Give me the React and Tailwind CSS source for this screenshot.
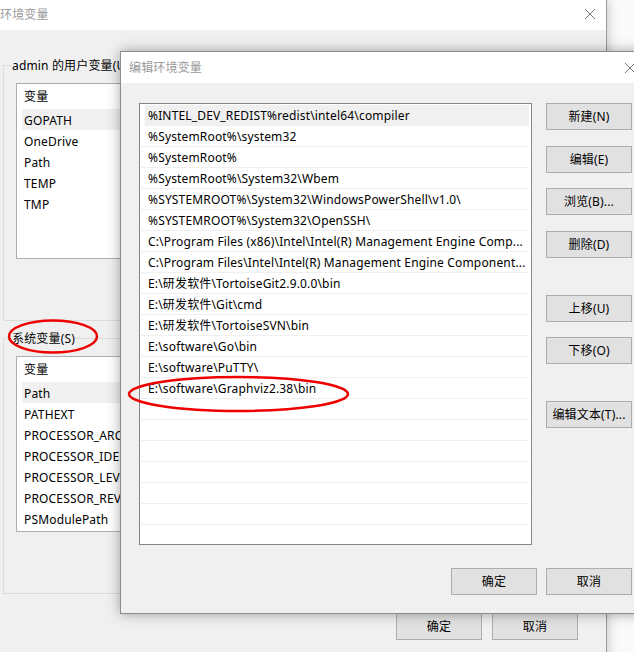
import React from "react";

const FONT = { fontFamily: '"Noto Sans", "Noto Sans CJK SC", sans-serif', letterSpacing: "0.16px" };

const paths = [
  "%INTEL_DEV_REDIST%redist\\intel64\\compiler",
  "%SystemRoot%\\system32",
  "%SystemRoot%",
  "%SystemRoot%\\System32\\Wbem",
  "%SYSTEMROOT%\\System32\\WindowsPowerShell\\v1.0\\",
  "%SYSTEMROOT%\\System32\\OpenSSH\\",
  "C:\\Program Files (x86)\\Intel\\Intel(R) Management Engine Comp...",
  "C:\\Program Files\\Intel\\Intel(R) Management Engine Component...",
  "E:\\研发软件\\TortoiseGit2.9.0.0\\bin",
  "E:\\研发软件\\Git\\cmd",
  "E:\\研发软件\\TortoiseSVN\\bin",
  "E:\\software\\Go\\bin",
  "E:\\software\\PuTTY\\",
  "E:\\software\\Graphviz2.38\\bin",
];

const userVars = ["GOPATH", "OneDrive", "Path", "TEMP", "TMP"];
const sysVars = [
  "Path",
  "PATHEXT",
  "PROCESSOR_ARCHITECTURE",
  "PROCESSOR_IDENTIFIER",
  "PROCESSOR_LEVEL",
  "PROCESSOR_REVISION",
  "PSModulePath",
];

function Btn({ children, className = "" }) {
  return (
    <div
      className={
        "h-[27px] w-[86px] flex items-center justify-center pt-[1px] bg-[#e1e1e1] border border-[#adadad] text-[12px] text-black " +
        className
      }
    >
      {children}
    </div>
  );
}

function CloseX({ className = "" }) {
  return (
    <svg width="12" height="12" viewBox="0 0 12 12" className={className}>
      <path d="M1 1 L11 11 M11 1 L1 11" stroke="#7a7a7a" strokeWidth="1" />
    </svg>
  );
}

function VarList({ items, heightClass }) {
  return (
    <div className={"ml-[12px] w-[600px] bg-white border border-[#adadad] " + heightClass}>
      <div className="h-[25px] flex items-center pt-[1px] pl-[7px] text-[12px]">变量</div>
      {items.map((v, i) => (
        <div
          key={v}
          className={
            "h-[21px] flex items-center pt-[2px] pl-[2px] ml-[5px] text-[12px] whitespace-nowrap " +
            (i === 0 ? "bg-[#f0f0f0]" : "")
          }
        >
          {v}
        </div>
      ))}
    </div>
  );
}

export default function App() {
  const emptyRows = 7;
  return (
    <div className="relative w-[634px] h-[652px] overflow-hidden bg-[#fafafa]" style={FONT}>
      {/* background window */}
      <div className="w-[607px] h-[660px] bg-[#f0f0f0] border-r border-[#9a9a9a] shadow-[2px_0_10px_rgba(0,0,0,0.18)] flex flex-col">
        <div className="h-[30px] bg-white flex items-center justify-between pr-[10px]">
          <span className="text-[12px] text-[#9a9a9a] ml-0 mt-[-1px]">环境变量</span>
          <CloseX className="mt-[-2px]" />
        </div>
        {/* group 1 */}
        <div className="relative mt-[35px] ml-[3px] h-[256px] w-[598px] border border-[#dcdcdc]">
          <span className="absolute left-[8px] top-[-8px] bg-[#f0f0f0] text-[12px] leading-[16px] text-black whitespace-nowrap">
            admin 的用户变量(U)
          </span>
          <div className="mt-[17px]">
            <VarList items={userVars} heightClass="h-[176px]" />
          </div>
        </div>
        {/* group 2 */}
        <div className="relative mt-[17px] ml-[3px] h-[256px] w-[598px] border border-[#dcdcdc]">
          <span className="absolute left-[8px] top-[-8px] bg-[#f0f0f0] text-[12px] leading-[16px] text-black whitespace-nowrap">
            系统变量(S)
          </span>
          <div className="mt-[17px]">
            <VarList items={sysVars} heightClass="h-[176px]" />
          </div>
        </div>
        <div className="flex gap-[10px] ml-[396px] mt-[19px]">
          <Btn>确定</Btn>
          <Btn>取消</Btn>
        </div>
      </div>

      {/* front dialog */}
      <div className="absolute left-[120px] top-[51px] w-[530px] h-[563px] bg-[#f0f0f0] border border-[#8c8c8c] shadow-[0_0_12px_rgba(0,0,0,0.35)] flex flex-col">
        <div className="h-[31px] bg-white flex items-center justify-between pr-[13px]">
          <span className="ml-[8px] text-[12px] text-[#9a9a9a]">编辑环境变量</span>
          <CloseX />
        </div>
        <div className="flex mt-[20px] ml-[18px]">
          <div className="w-[393px] h-[442px] bg-white border border-[#828790] pt-[1px] pl-[1px] pr-[2px] overflow-hidden">
            {paths.map((p, i) =>
              i === 0 ? (
                <div
                  key={p}
                  className="h-[21px] flex items-center pt-[2px] ml-[4px] pl-[3px] text-[12px] text-black whitespace-nowrap border-b border-[#f0f0f0] bg-[#f0f0f0]"
                >
                  {p}
                </div>
              ) : (
                <div
                  key={p}
                  className="h-[21px] flex items-center pt-[2px] pl-[7px] text-[12px] text-black whitespace-nowrap border-b border-[#f0f0f0]"
                >
                  {p}
                </div>
              )
            )}
            {Array.from({ length: emptyRows }).map((_, i) => (
              <div key={"e" + i} className="h-[21px] border-b border-[#f0f0f0]" />
            ))}
          </div>
          <div className="ml-[14px] flex flex-col">
            <Btn>新建(N)</Btn>
            <Btn className="mt-[16px]">编辑(E)</Btn>
            <Btn className="mt-[15px]">浏览(B)...</Btn>
            <Btn className="mt-[16px]">删除(D)</Btn>
            <Btn className="mt-[37px]">上移(U)</Btn>
            <Btn className="mt-[15px]">下移(O)</Btn>
            <Btn className="mt-[37px]">编辑文本(T)...</Btn>
          </div>
        </div>
        <div className="flex gap-[9px] ml-[330px] mt-[23px]">
          <Btn>确定</Btn>
          <Btn>取消</Btn>
        </div>
      </div>

      {/* red annotation ellipses */}
      <svg className="absolute left-0 top-0 pointer-events-none" width="634" height="652">
        <ellipse cx="53" cy="336.5" rx="44" ry="16" fill="none" stroke="#ee0000" strokeWidth="2.5" />
        <ellipse cx="238.5" cy="394" rx="109.5" ry="17" fill="none" stroke="#ee0000" strokeWidth="2.5" />
      </svg>
    </div>
  );
}
